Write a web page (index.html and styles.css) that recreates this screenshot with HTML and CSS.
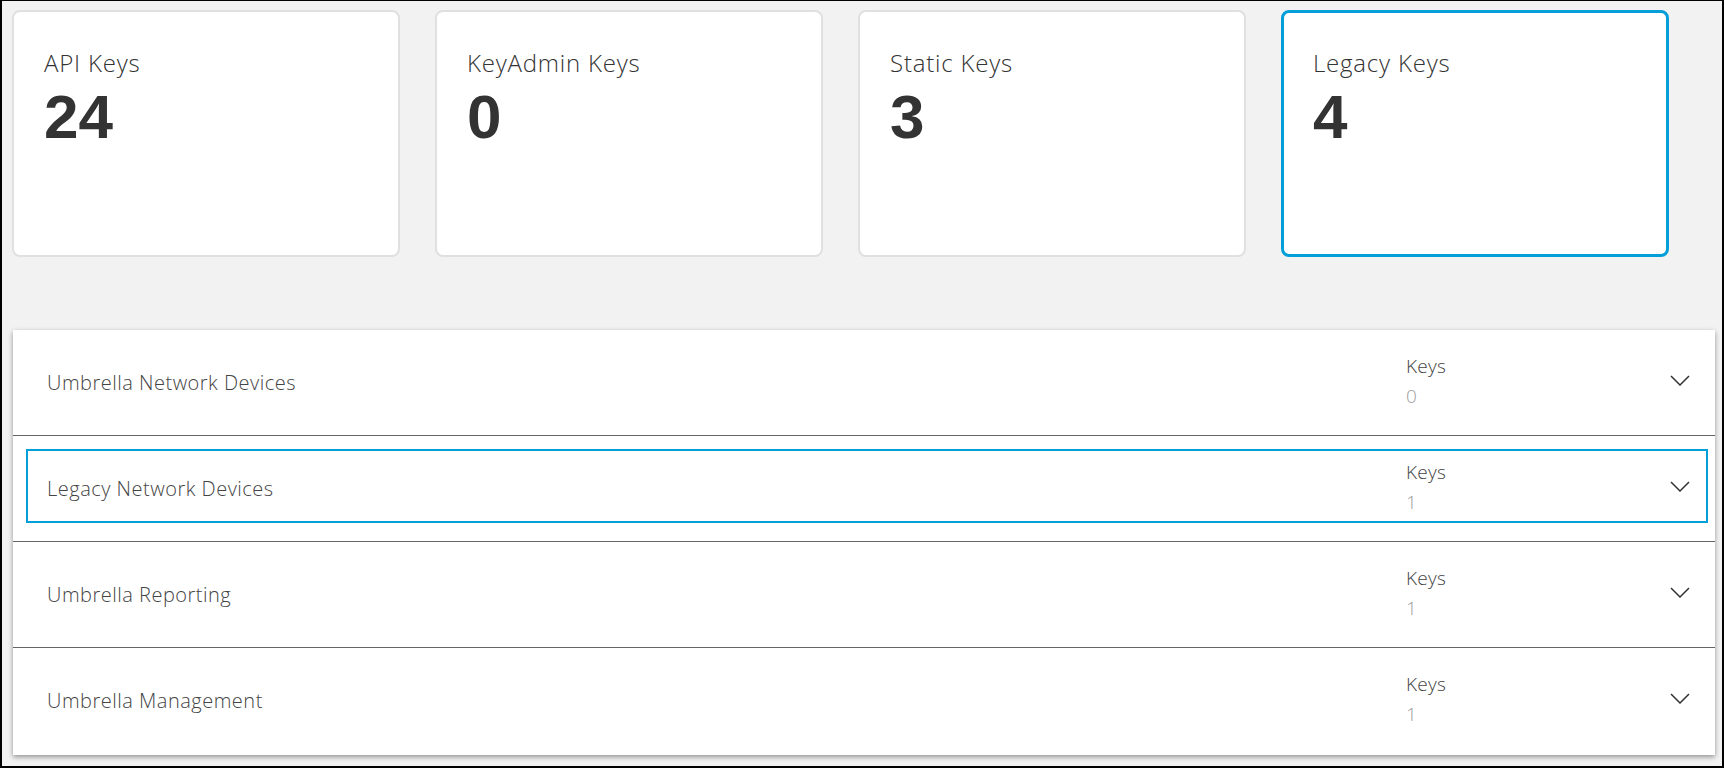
FILE: index.html
```html
<!DOCTYPE html>
<html lang="en">
<head>
    <meta charset="UTF-8">
    <title>API Keys</title>
    <link rel="stylesheet" href="styles.css">
</head>
<body>
    <div class="frame">
        <div class="cards">
            <div class="card">
                <div class="card-label">API Keys</div>
                <div class="card-count">24</div>
            </div>
            <div class="card">
                <div class="card-label">KeyAdmin Keys</div>
                <div class="card-count">0</div>
            </div>
            <div class="card">
                <div class="card-label">Static Keys</div>
                <div class="card-count">3</div>
            </div>
            <div class="card selected">
                <div class="card-label">Legacy Keys</div>
                <div class="card-count">4</div>
            </div>
        </div>

        <div class="panel">
            <div class="row">
                <div class="row-inner">
                    <div class="row-name">Umbrella Network Devices</div>
                    <div class="row-keys">
                        <div class="keys-label">Keys</div>
                        <div class="keys-count">0</div>
                    </div>
                    <svg class="chevron" viewBox="0 0 20 11"><polyline points="1,1 10,10 19,1"/></svg>
                </div>
            </div>
            <div class="row">
                <div class="row-inner focused">
                    <div class="row-name">Legacy Network Devices</div>
                    <div class="row-keys">
                        <div class="keys-label">Keys</div>
                        <div class="keys-count">1</div>
                    </div>
                    <svg class="chevron" viewBox="0 0 20 11"><polyline points="1,1 10,10 19,1"/></svg>
                </div>
            </div>
            <div class="row">
                <div class="row-inner">
                    <div class="row-name">Umbrella Reporting</div>
                    <div class="row-keys">
                        <div class="keys-label">Keys</div>
                        <div class="keys-count">1</div>
                    </div>
                    <svg class="chevron" viewBox="0 0 20 11"><polyline points="1,1 10,10 19,1"/></svg>
                </div>
            </div>
            <div class="row">
                <div class="row-inner">
                    <div class="row-name">Umbrella Management</div>
                    <div class="row-keys">
                        <div class="keys-label">Keys</div>
                        <div class="keys-count">1</div>
                    </div>
                    <svg class="chevron" viewBox="0 0 20 11"><polyline points="1,1 10,10 19,1"/></svg>
                </div>
            </div>
        </div>
    </div>
</body>
</html>
```

FILE: styles.css
```css
* {
    margin: 0;
    padding: 0;
    box-sizing: border-box;
}

body {
    background: #f2f2f2;
    font-family: 'Open Sans', sans-serif;
    color: #3a3a3a;
}

.frame {
    width: 1724px;
    height: 768px;
    border: 2px solid #000;
    border-top-width: 1px;
    padding: 9px 8px 0 10px;
    background: #f2f2f2;
}

.cards {
    display: grid;
    grid-template-columns: repeat(4, 388px);
    gap: 35px;
}

.card {
    height: 247px;
    background: #fff;
    border: 2px solid #e0e0e0;
    border-radius: 8px;
    padding: 37px 30px 0;
}

.card.selected {
    border: 3px solid #049fd9;
    padding: 36px 29px 0;
}

.card-label {
    font-size: 24px;
    font-weight: 300;
    line-height: 28px;
    letter-spacing: 0.8px;
    color: #333;
}

.card-count {
    margin-top: 9px;
    font-family: 'Liberation Sans', Arial, sans-serif;
    font-size: 62px;
    font-weight: bold;
    line-height: 62px;
    color: #333;
}

.panel {
    margin: 73px 0 0 1px;
    width: 1702px;
    background: #fff;
    box-shadow: 0 2px 5px rgba(0, 0, 0, 0.4);
}

.row {
    height: 106px;
    border-bottom: 1px solid #666;
    padding: 13px 7px 17px 13px;
}

.row:last-child {
    height: 107px;
    border-bottom: none;
}

.row-inner {
    height: 74px;
    display: flex;
    align-items: center;
    border: 2px solid transparent;
    padding: 0 16px 0 19px;
}

.row-inner.focused {
    border-color: #049fd9;
}

.row-name {
    flex: 1;
    padding-top: 4px;
    font-size: 20px;
    font-weight: 300;
    letter-spacing: 0.5px;
    color: #444;
}

.row-keys {
    width: 264px;
    font-size: 19px;
    font-weight: 300;
    line-height: 30px;
    letter-spacing: 0.3px;
    margin-top: 2px;
}

.keys-label {
    color: #444;
}

.keys-count {
    color: #9e9e9e;
}

.chevron {
    width: 20px;
    height: 11px;
    fill: none;
    stroke: #333;
    stroke-width: 1.5;
}
```
